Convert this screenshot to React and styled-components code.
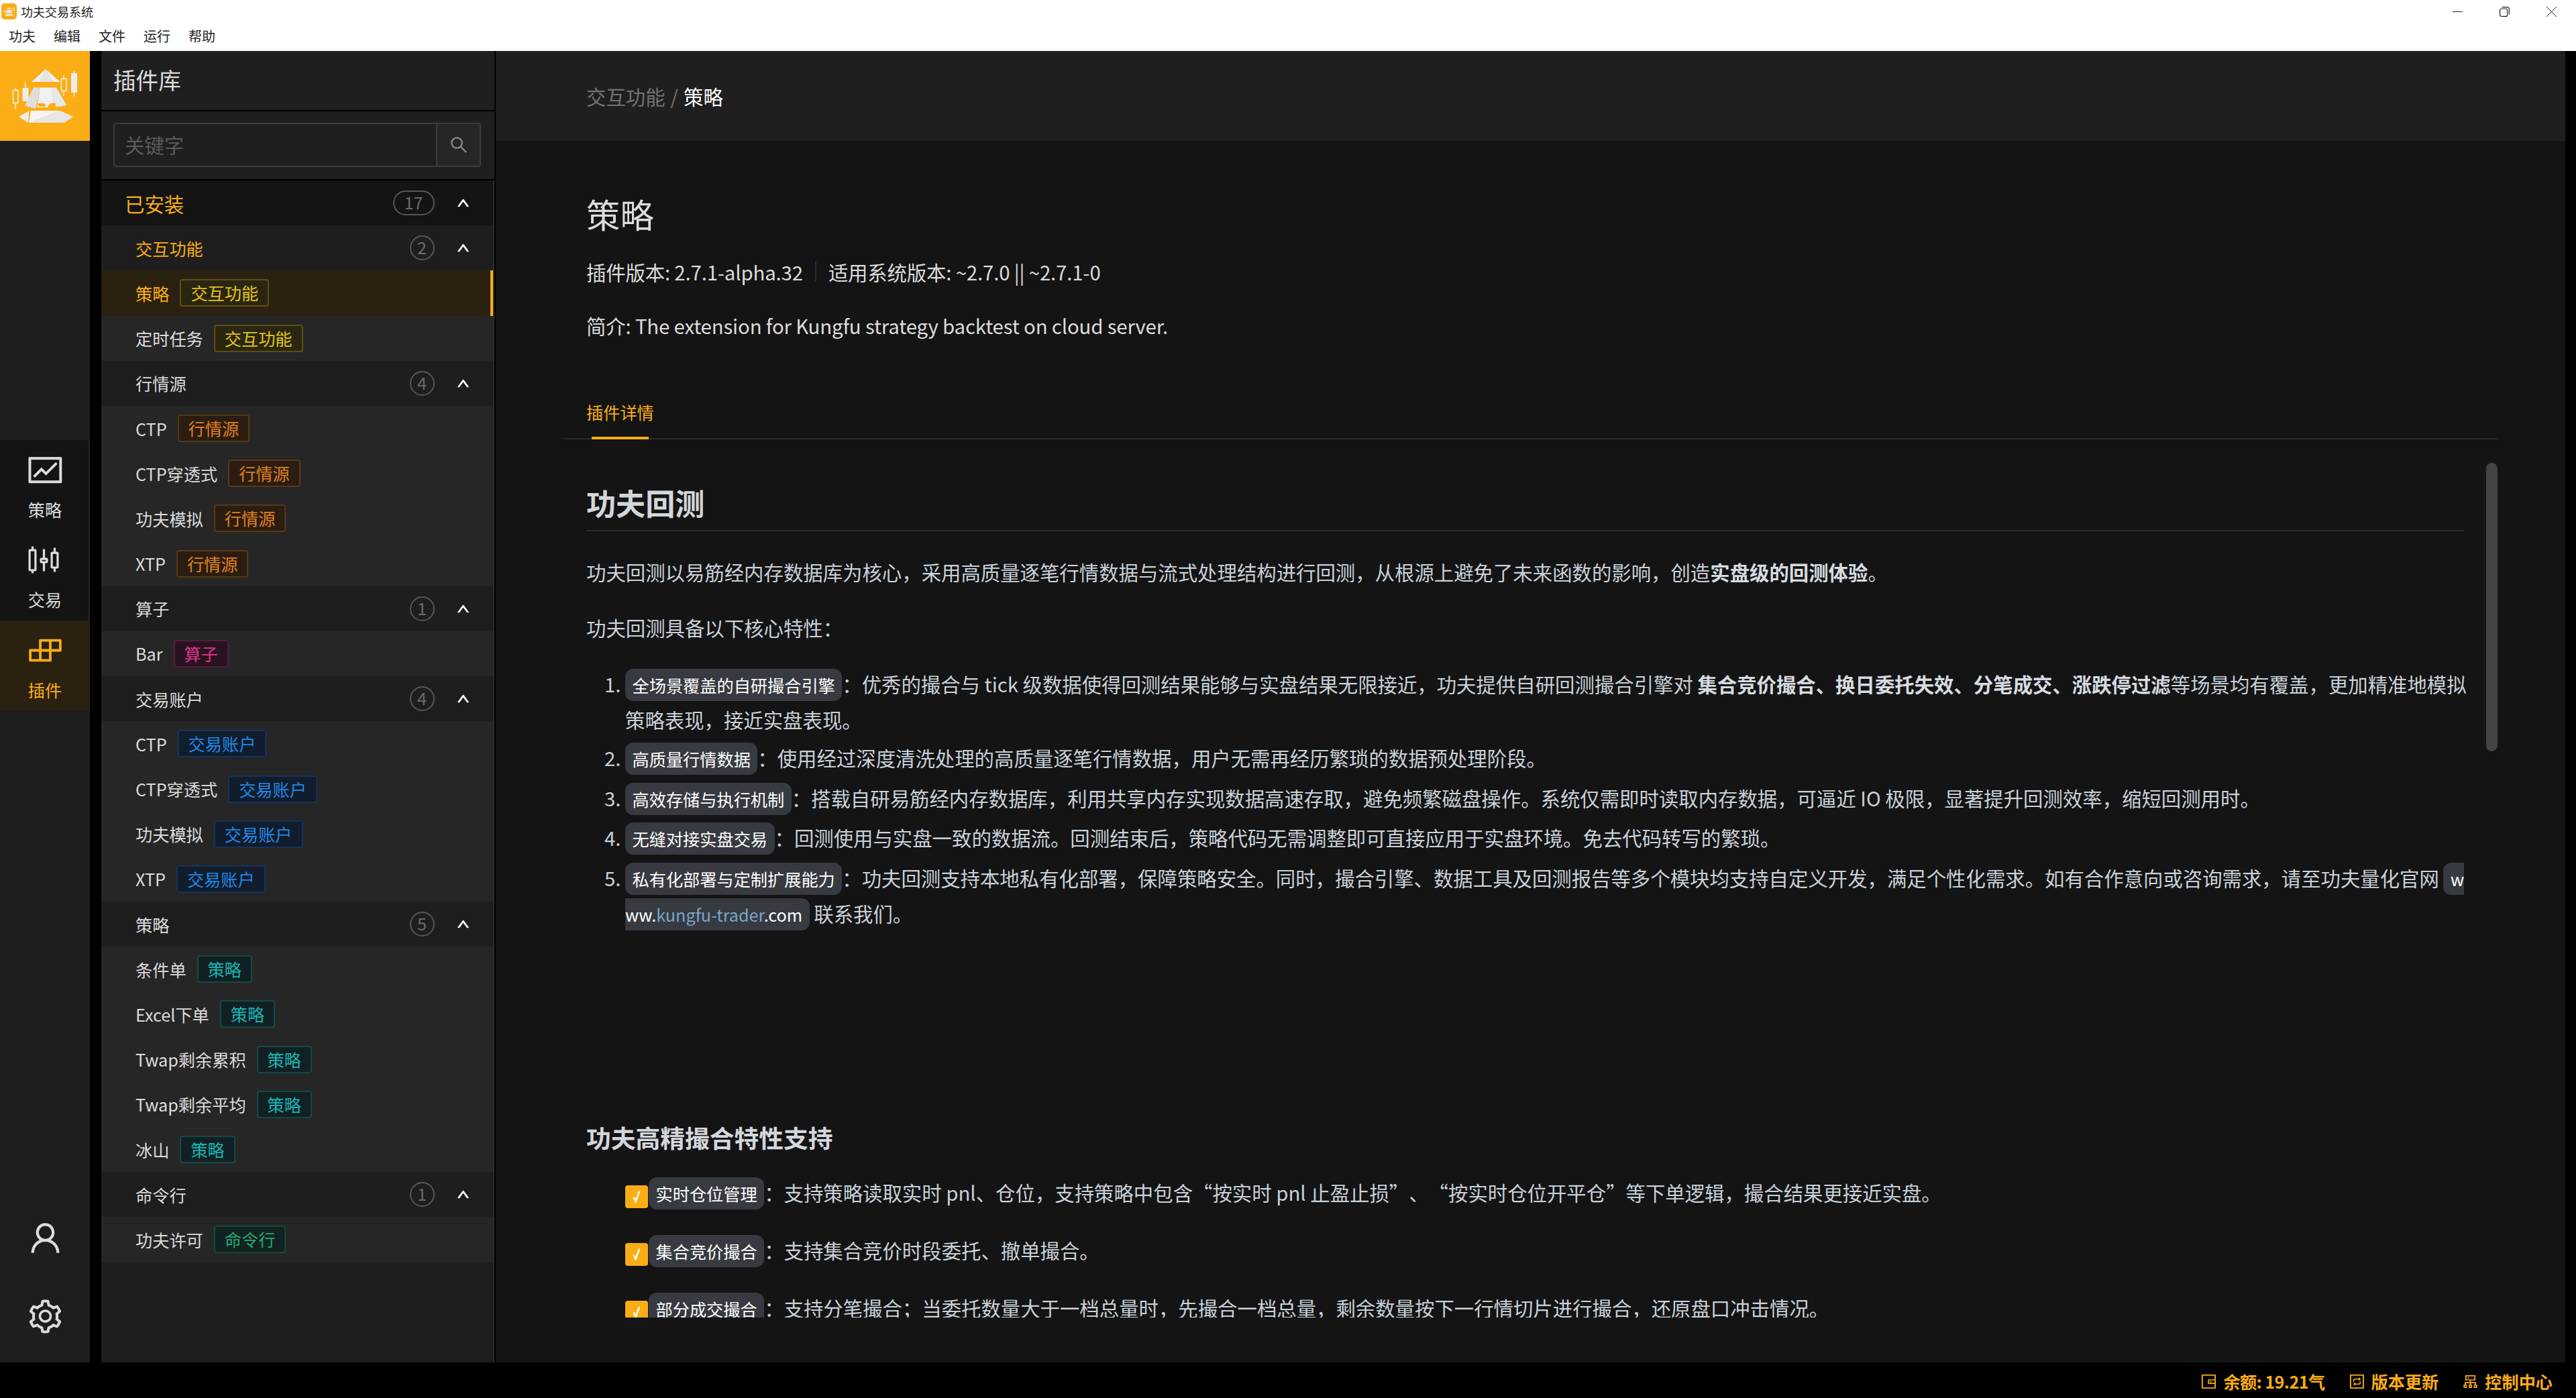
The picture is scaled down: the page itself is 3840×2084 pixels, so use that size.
import React from 'react';
import styled, { createGlobalStyle } from 'styled-components';
import {
    AiOutlineFund,
    AiOutlineBuild,
    AiOutlineUser,
    AiOutlineSetting,
    AiOutlineSearch,
    AiOutlineUp,
    AiOutlineWallet,
    AiOutlineInteraction,
    AiOutlineCluster,
} from 'react-icons/ai';

const GOLD = '#faad14';

const tagColors = {
    gold: { bg: '#2b2611', border: '#595014', color: '#e0c41a' },
    orange: { bg: '#2b1d11', border: '#593815', color: '#e08020' },
    magenta: { bg: '#291321', border: '#551c3b', color: '#e0368f' },
    blue: { bg: '#111d2c', border: '#15325b', color: '#2088e8' },
    cyan: { bg: '#112123', border: '#144848', color: '#18b4b4' },
    green: { bg: '#112320', border: '#12493a', color: '#25a878' },
};

const GlobalStyle = createGlobalStyle`
    html, body {
        margin: 0;
        padding: 0;
        background: #000;
    }
    body {
        font-family: "Noto Sans CJK SC", "Noto Sans", sans-serif;
    }
    * {
        box-sizing: border-box;
    }
`;

const Page = styled.div`
    width: 3840px;
    height: 2084px;
    display: flex;
    flex-direction: column;
    overflow: hidden;
    background: #000;
`;

const TitleBar = styled.div`
    height: 76px;
    flex: none;
    background: #fff;
    color: #222;
    display: flex;
    flex-direction: column;
`;

const TitleRow = styled.div`
    height: 34px;
    display: flex;
    align-items: center;
    padding: 0 29px 0 2px;
    font-size: 18px;
`;

const AppIcon = styled.div`
    width: 23px;
    height: 24px;
    margin-right: 6px;
    border-radius: 5px;
    background: ${GOLD};
    display: flex;
`;

const WindowButtons = styled.div`
    margin-left: auto;
    display: flex;
    align-items: center;
    gap: 55px;
    color: #222;
`;

const MenuRow = styled.div`
    height: 42px;
    display: flex;
    align-items: flex-start;
    gap: 27px;
    padding: 6px 0 0 13px;
    font-size: 20px;
    line-height: 28px;
`;

const Workspace = styled.div`
    flex: 1;
    min-height: 0;
    display: flex;
`;

const SideNav = styled.div`
    width: 134px;
    flex: none;
    margin-right: 17px;
    background: #1e1e1e;
    display: flex;
    flex-direction: column;
`;

const LogoBox = styled.div`
    height: 134px;
    background: ${GOLD};
    display: flex;
`;

const NavList = styled.div`
    margin-top: 446px;
    display: flex;
    flex-direction: column;
`;

const NavItem = styled.div`
    height: 134.4px;
    display: flex;
    flex-direction: column;
    align-items: center;
    color: ${(p) => (p.$active ? GOLD : '#dcdcdc')};
    background: ${(p) => (p.$active ? '#2b2111' : '#141414')};
    border-right: 2px solid ${(p) => (p.$active ? '#2b2111' : '#242424')};
    font-size: 25.2px;
    line-height: 36px;
    padding: 16px 0 0 2px;

    svg {
        display: block;
        margin-bottom: 12px;
    }
`;

const NavFooter = styled.div`
    margin-top: auto;
    padding-bottom: 10px;
    display: flex;
    flex-direction: column;
    color: #dcdcdc;
`;

const FooterCell = styled.div`
    height: 117px;
    display: flex;
    align-items: center;
    justify-content: center;
`;

const Panel = styled.div`
    width: 586px;
    flex: none;
    margin-right: 2px;
    display: flex;
    flex-direction: column;
    color: #dcdcdc;
`;

const PanelHeader = styled.div`
    height: 88px;
    flex: none;
    margin-bottom: 2px;
    padding: 0 0 3px 18px;
    display: flex;
    align-items: center;
    font-size: 33.6px;
    background: #1f1f1f;
`;

const SearchBar = styled.div`
    height: 101px;
    flex: none;
    margin-bottom: 2px;
    padding: 17px 20px 18px 18px;
    background: #1f1f1f;
`;

const SearchBox = styled.div`
    height: 66px;
    display: flex;
    border: 2px solid #3c3c3c;
    border-radius: 4px;
    overflow: hidden;
`;

const SearchInput = styled.div`
    flex: 1;
    padding: 0 0 3px 15px;
    display: flex;
    align-items: center;
    font-size: 29.4px;
    color: #5a5a5a;
`;

const SearchButton = styled.div`
    width: 65px;
    border-left: 2px solid #3c3c3c;
    background: #262626;
    color: #8c8c8c;
    display: flex;
    align-items: center;
    justify-content: center;
`;

const PluginList = styled.div`
    flex: 1;
    min-height: 0;
    background: #1e1e1e;
    border-right: 2px solid #2c2c2c;
`;

const Row = styled.div`
    height: 67.2px;
    display: flex;
    align-items: center;
    font-size: ${(p) => (p.$level === 0 ? 29.4 : 25.2)}px;
    padding: 0 34.5px 0 ${(p) => (p.$level === 0 ? 35 : 51)}px;
    background: ${(p) => (p.$level === 0 ? '#141414' : p.$level === 1 ? '#1e1e1e' : '#262626')};
    color: ${(p) => (p.$active ? GOLD : '#dcdcdc')};
`;

const PluginItem = styled(Row)`
    background: ${(p) => (p.$active ? '#2b2111' : '#262626')};
    border-right: ${(p) => (p.$active ? `4px solid ${GOLD}` : 'none')};
`;

const Count = styled.span`
    margin-left: auto;
    margin-right: 32px;
    height: 37px;
    min-width: 37px;
    padding: 0 ${(p) => (p.$wide ? 15 : 0)}px;
    border: 2px solid #565656;
    border-radius: 19px;
    color: #6a6a6a;
    font-size: 25.2px;
    line-height: 31px;
    text-align: center;
`;

const Tag = styled.span`
    height: 41px;
    margin-left: 16px;
    padding: 0 14px;
    border: 2px solid ${(p) => tagColors[p.$color].border};
    border-radius: 4px;
    background: ${(p) => tagColors[p.$color].bg};
    color: ${(p) => tagColors[p.$color].color};
    font-size: 25.2px;
    line-height: 36px;
`;

const Main = styled.div`
    flex: 1;
    min-width: 0;
    margin-right: 16px;
    display: flex;
    flex-direction: column;
    background: #141414;
    color: #dcdcdc;
`;

const Breadcrumb = styled.div`
    height: 134px;
    flex: none;
    padding-left: 135px;
    display: flex;
    align-items: center;
    font-size: 29.4px;
    color: #fff;
    background: #1f1f1f;
`;

const CrumbLink = styled.span`
    color: #737373;
`;

const CrumbSep = styled.span`
    color: #737373;
    margin: 0 8px;
`;

const MainBody = styled.div`
    flex: 1;
    min-height: 0;
    padding: 0 101px 67px;
    display: flex;
    flex-direction: column;
`;

const PluginInfo = styled.div`
    flex: none;
    padding: 71px 0 0 34px;
`;

const PluginTitle = styled.div`
    font-size: 50.4px;
    line-height: 75.6px;
`;

const MetaLine = styled.div`
    margin-top: ${(p) => p.$top}px;
    font-size: 29.4px;
    line-height: 44px;
    letter-spacing: -0.16px;
    display: flex;
    align-items: center;
`;

const MetaDivider = styled.span`
    width: 2px;
    height: 29px;
    margin: 0 18px;
    background: #2e2e2e;
`;

const TabBar = styled.div`
    flex: none;
    height: 75px;
    margin-top: 73px;
    padding: 15px 0 0 34px;
    border-bottom: 2px solid #2a2a2a;
`;

const TabLabel = styled.div`
    position: relative;
    display: inline-block;
    font-size: 25.2px;
    line-height: 38px;
    color: ${GOLD};

    &::after {
        content: '';
        position: absolute;
        left: 8px;
        right: 8px;
        top: 56px;
        height: 4px;
        background: ${GOLD};
    }
`;

const ScrollArea = styled.div`
    flex: 1;
    min-height: 0;
    display: flex;
    gap: 32px;
    overflow: hidden;
`;

const Markdown = styled.div`
    flex: 1;
    min-width: 0;
    margin-left: 34px;
    padding-top: 67px;
    color: #c9d1d9;
    font-size: 29.4px;
    line-height: 52.9px;
    white-space: nowrap;

    strong {
        color: #d6dbe0;
        font-weight: 700;
    }
`;

const ScrollThumb = styled.div`
    width: 17px;
    height: 430px;
    margin-top: 35px;
    flex: none;
    border-radius: 9px;
    background: #444;
`;

const H2 = styled.div`
    font-size: 44.1px;
    line-height: 55px;
    font-weight: 700;
    color: #d3d6da;
    padding-bottom: 13px;
    border-bottom: 2px solid #2a2a2a;
    margin-bottom: 34px;
`;

const H3 = styled.div`
    font-size: 36.75px;
    line-height: 46px;
    font-weight: 700;
    color: #d3d6da;
    margin: 284px 0 33px;
`;

const Para = styled.div`
    margin-bottom: ${(p) => p.$after}px;
`;

const OrderedList = styled.ol`
    margin: 0;
    padding-left: 58px;
`;

const ListItem = styled.li`
    margin-bottom: 6.7px;

    &:first-child {
        margin-bottom: 4px;
    }
`;

const TaskList = styled.div`
    padding-left: 58px;
`;

const TaskItem = styled.div`
    margin-bottom: 33.1px;
`;

const Check = styled.span`
    display: inline-flex;
    align-items: center;
    justify-content: center;
    width: 34px;
    height: 34px;
    margin-right: 1px;
    border-radius: 4px;
    background: ${GOLD};
    vertical-align: -3px;
    line-height: 1;
`;

const Code = styled.code`
    font-family: inherit;
    font-size: 25.2px;
    line-height: 1;
    color: #fff;
    background: #373a40;
    padding: 6px 10.5px;
    border-radius: 12px;
`;

const CodeLink = styled.span`
    color: #7aa5c9;
`;

// the curly quotes take a full em box in the reference
const Quote = styled.span`
    display: inline-block;
    width: 1em;
    text-align: ${(p) => (p.$open ? 'right' : 'left')};
`;

const StatusBar = styled.div`
    height: 53px;
    flex: none;
    display: flex;
    align-items: center;
    justify-content: flex-end;
    gap: 34px;
    padding: 3px 35px 0 0;
    color: ${GOLD};
    font-size: 25.2px;
    font-weight: 700;
`;

const StatusItem = styled.div`
    display: flex;
    align-items: center;
    gap: 8px;
    letter-spacing: ${(p) => (p.$tight ? -0.6 : 0)}px;
`;

const LogoMark = () => (
    <svg viewBox="0 0 134 134" width="100%" height="100%">
        <polygon points="68,27 47,46 60,46" fill="#f0f0f0" />
        <polygon points="68,27 60,46 80,46" fill="#e4e4e4" />
        <polygon points="68,27 80,46 89.500,46" fill="#f4f4f4" />
        <polygon points="50,54.500 60,54.500 53,86 37,81.500" fill="#dedede" />
        <polygon points="60,54.500 77,54.500 80,77 71,84 55,84" fill="#f0f0f0" />
        <polygon points="77,54.500 84,54.500 99.500,81 84,83.500 80,77" fill="#e8e8e8" />
        <path d="M56 78h10l3 4-3 1h-9zM71 82l4-4h8l-1 5h-9z" fill={GOLD} />
        <polygon points="43.500,89 28,98 42,107" fill="#ececec" />
        <polygon points="46,89 90,89 43,107" fill="#f4f4f4" />
        <polygon points="90,89 109,98 96,107 43,107" fill="#e6e6e6" />
        <rect x="19.500" y="58.500" width="7.500" height="19" fill="none" stroke="#f4f4f4" strokeWidth="1.500" />
        <path d="M23.200 55v3.500M23.200 78v9" stroke="#f4f4f4" strokeWidth="1.500" />
        <rect x="33.500" y="55" width="9" height="20" fill="#ececec" />
        <path d="M38 46v9" stroke="#ececec" strokeWidth="1.500" />
        <rect x="91.500" y="41.500" width="7.500" height="18" fill="none" stroke="#f4f4f4" strokeWidth="1.500" />
        <path d="M94.800 36v5.500M94.800 60v7" stroke="#f4f4f4" strokeWidth="1.500" />
        <rect x="106" y="33" width="9" height="29" fill="#ececec" />
        <path d="M110.500 30v3M110.500 62v6" stroke="#ececec" strokeWidth="1.500" />
    </svg>
);

const CandleIcon = () => (
    <svg width="57" height="57" viewBox="0 0 57 57" fill="none" stroke="currentColor" strokeWidth="3.200">
        <rect x="5.100" y="14.200" width="8.800" height="29.800" rx="0.500" />
        <path d="M9.500 8.600v5.600M9.500 44v4.600" />
        <rect x="22.100" y="27.200" width="8.800" height="4.800" rx="0.500" />
        <path d="M26.500 12.600v14.600M26.500 32v13.600" />
        <rect x="38.100" y="18.200" width="8.800" height="21.800" rx="0.500" />
        <path d="M42.500 10.600v7.600M42.500 40v6.600" />
    </svg>
);

const MinimizeIcon = () => (
    <svg width="15" height="15" viewBox="0 0 15 15">
        <path d="M0 7.500h15" stroke="currentColor" strokeWidth="1" />
    </svg>
);

const RestoreIcon = () => (
    <svg width="15" height="15" viewBox="0 0 15 15" fill="none" stroke="currentColor" strokeWidth="1.200">
        <rect x="0.600" y="3" width="11" height="11.400" rx="2" />
        <path d="M3.500 0.700h8.500a2.400 2.400 0 0 1 2.400 2.400v8.500" />
    </svg>
);

const CloseIcon = () => (
    <svg width="15" height="15" viewBox="0 0 15 15">
        <path d="M0 0l15 15M15 0L0 15" stroke="currentColor" strokeWidth="1" />
    </svg>
);

const CheckMark = () => (
    <svg width="18" height="18" viewBox="0 0 18 18" fill="none" stroke="#fff" strokeWidth="2.600">
        <path d="M4.500 9.500l3 6.500 5.500-15" />
    </svg>
);

const plugins = [
    {
        name: '交互功能', count: 2, active: true, color: 'gold', items: ['策略', '定时任务'],
    },
    {
        name: '行情源', count: 4, color: 'orange', items: ['CTP', 'CTP穿透式', '功夫模拟', 'XTP'],
    },
    {
        name: '算子', count: 1, color: 'magenta', items: ['Bar'],
    },
    {
        name: '交易账户', count: 4, color: 'blue', items: ['CTP', 'CTP穿透式', '功夫模拟', 'XTP'],
    },
    {
        name: '策略', count: 5, color: 'cyan', items: ['条件单', 'Excel下单', 'Twap剩余累积', 'Twap剩余平均', '冰山'],
    },
    {
        name: '命令行', count: 1, color: 'green', items: ['功夫许可'],
    },
];

const Chevron = () => <AiOutlineUp size={21} color="#fff" stroke="#fff" strokeWidth={50} />;

const PluginGroup = ({ group }) => (
    <>
        <Row $level={1} $active={group.active}>
            {group.name}
            <Count>{group.count}</Count>
            <Chevron />
        </Row>
        {group.items.map((item, i) => (
            <PluginItem key={item} $level={2} $active={group.active && i === 0}>
                {item}
                <Tag $color={group.color}>{group.name}</Tag>
            </PluginItem>
        ))}
    </>
);

const App = () => {
    return (
        <Page>
            <GlobalStyle />
            <TitleBar>
                <TitleRow>
                    <AppIcon><LogoMark /></AppIcon>
                    功夫交易系统
                    <WindowButtons>
                        <MinimizeIcon />
                        <RestoreIcon />
                        <CloseIcon />
                    </WindowButtons>
                </TitleRow>
                <MenuRow>
                    <span>功夫</span>
                    <span>编辑</span>
                    <span>文件</span>
                    <span>运行</span>
                    <span>帮助</span>
                </MenuRow>
            </TitleBar>
            <Workspace>
                <SideNav>
                    <LogoBox><LogoMark /></LogoBox>
                    <NavList>
                        <NavItem>
                            <AiOutlineFund size={57} />
                            策略
                        </NavItem>
                        <NavItem>
                            <CandleIcon />
                            交易
                        </NavItem>
                        <NavItem $active>
                            <AiOutlineBuild size={57} />
                            插件
                        </NavItem>
                    </NavList>
                    <NavFooter>
                        <FooterCell><AiOutlineUser size={57} /></FooterCell>
                        <FooterCell><AiOutlineSetting size={57} /></FooterCell>
                    </NavFooter>
                </SideNav>
                <Panel>
                    <PanelHeader>插件库</PanelHeader>
                    <SearchBar>
                        <SearchBox>
                            <SearchInput>关键字</SearchInput>
                            <SearchButton><AiOutlineSearch size={30} /></SearchButton>
                        </SearchBox>
                    </SearchBar>
                    <PluginList>
                        <Row $level={0} $active>
                            已安装
                            <Count $wide>17</Count>
                            <Chevron />
                        </Row>
                        {plugins.map((group) => (
                            <PluginGroup key={group.name} group={group} />
                        ))}
                    </PluginList>
                </Panel>
                <Main>
                    <Breadcrumb>
                        <CrumbLink>交互功能</CrumbLink>
                        <CrumbSep>/</CrumbSep>
                        策略
                    </Breadcrumb>
                    <MainBody>
                        <PluginInfo>
                            <PluginTitle>策略</PluginTitle>
                            <MetaLine $top={26}>
                                插件版本: 2.7.1-alpha.32
                                <MetaDivider />
                                适用系统版本: ~2.7.0 || ~2.7.1-0
                            </MetaLine>
                            <MetaLine $top={36}>
                                简介: The extension for Kungfu strategy backtest on cloud server.
                            </MetaLine>
                        </PluginInfo>
                        <TabBar>
                            <TabLabel>插件详情</TabLabel>
                        </TabBar>
                        <ScrollArea>
                            <Markdown>
                                <H2>功夫回测</H2>
                                <Para $after={30}>
                                    功夫回测以易筋经内存数据库为核心，采用高质量逐笔行情数据与流式处理结构进行回测，从根源上避免了未来函数的影响，创造<strong>实盘级的回测体验</strong>。
                                </Para>
                                <Para $after={32}>功夫回测具备以下核心特性：</Para>
                                <OrderedList>
                                    <ListItem>
                                        <Code>全场景覆盖的自研撮合引擎</Code>：优秀的撮合与 tick 级数据使得回测结果能够与实盘结果无限接近，功夫提供自研回测撮合引擎对 <strong>集合竞价撮合、换日委托失效、分笔成交、涨跌停过滤</strong>等场景均有覆盖，更加精准地模拟<br />
                                        策略表现，接近实盘表现。
                                    </ListItem>
                                    <ListItem>
                                        <Code>高质量行情数据</Code>：使用经过深度清洗处理的高质量逐笔行情数据，用户无需再经历繁琐的数据预处理阶段。
                                    </ListItem>
                                    <ListItem>
                                        <Code>高效存储与执行机制</Code>：搭载自研易筋经内存数据库，利用共享内存实现数据高速存取，避免频繁磁盘操作。系统仅需即时读取内存数据，可逼近 IO 极限，显著提升回测效率，缩短回测用时。
                                    </ListItem>
                                    <ListItem>
                                        <Code>无缝对接实盘交易</Code>：回测使用与实盘一致的数据流。回测结束后，策略代码无需调整即可直接应用于实盘环境。免去代码转写的繁琐。
                                    </ListItem>
                                    <ListItem>
                                        <Code>私有化部署与定制扩展能力</Code>：功夫回测支持本地私有化部署，保障策略安全。同时，撮合引擎、数据工具及回测报告等多个模块均支持自定义开发，满足个性化需求。如有合作意向或咨询需求，请至功夫量化官网 <Code>w<br />ww.<CodeLink>kungfu-trader</CodeLink>.com</Code> 联系我们。
                                    </ListItem>
                                </OrderedList>
                                <H3>功夫高精撮合特性支持</H3>
                                <TaskList>
                                    <TaskItem>
                                        <Check><CheckMark /></Check><Code>实时仓位管理</Code>：支持策略读取实时 pnl、仓位，支持策略中包含<Quote $open>“</Quote>按实时 pnl 止盈止损<Quote>”</Quote>、<Quote $open>“</Quote>按实时仓位开平仓<Quote>”</Quote>等下单逻辑，撮合结果更接近实盘。
                                    </TaskItem>
                                    <TaskItem>
                                        <Check><CheckMark /></Check><Code>集合竞价撮合</Code>：支持集合竞价时段委托、撤单撮合。
                                    </TaskItem>
                                    <TaskItem>
                                        <Check><CheckMark /></Check><Code>部分成交撮合</Code>：支持分笔撮合；当委托数量大于一档总量时，先撮合一档总量，剩余数量按下一行情切片进行撮合，还原盘口冲击情况。
                                    </TaskItem>
                                </TaskList>
                            </Markdown>
                            <ScrollThumb />
                        </ScrollArea>
                    </MainBody>
                </Main>
            </Workspace>
            <StatusBar>
                <StatusItem $tight><AiOutlineWallet size={27} />余额: 19.21气</StatusItem>
                <StatusItem><AiOutlineInteraction size={27} />版本更新</StatusItem>
                <StatusItem><AiOutlineCluster size={27} />控制中心</StatusItem>
            </StatusBar>
        </Page>
    );
};

export default App;
